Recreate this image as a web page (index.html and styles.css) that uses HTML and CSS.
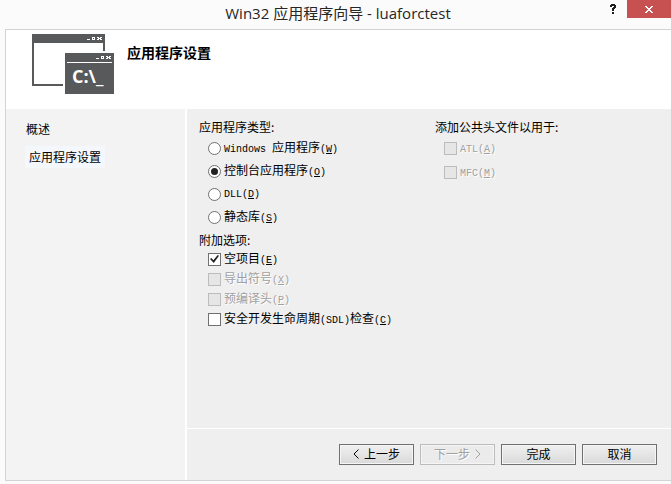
FILE: index.html
```html
<!DOCTYPE html>
<html lang="zh-CN">
<head>
<meta charset="utf-8">
<title>Win32 应用程序向导 - luaforctest</title>
<link rel="stylesheet" href="styles.css">
</head>
<body>
<div class="window">
  <div class="titlebar">
    <h1 class="title">Win32 应用程序向导 - luaforctest</h1>
    <div class="window-controls">
      <button class="help" type="button" aria-label="帮助">
        <svg width="6" height="10" viewBox="0 0 6 10" shape-rendering="crispEdges"><path d="M1 0h4v1h1v3h-1v1h-1v2h-2v-3h1v-1h1v-1h-2v1h-2v-2h1zM2 8h2v2h-2z" fill="#1e1e1e"/></svg>
      </button>
      <button class="close" type="button" aria-label="关闭">
        <svg width="8" height="7" viewBox="0 0 8 7" shape-rendering="crispEdges"><path d="M0 0h2v1h1v1h2v-1h1v-1h2v1h-1v1h-1v1h-1v1h1v1h1v1h1v1h-2v-1h-1v-1h-2v1h-1v1h-2v-1h1v-1h1v-1h1v-1h-1v-1h-1v-1h-1z" fill="#fff"/></svg>
      </button>
    </div>
  </div>
  <form class="frame">
    <header class="banner">
      <svg class="logo" width="82" height="60" viewBox="0 0 82 60" shape-rendering="crispEdges">
        <path d="M0 0h73v17h-2v-8h-69v41h29v2h-31z" fill="#58595b"/>
        <path d="M33 19h49v41h-49z" fill="#58595b"/>
        <g fill="#fff">
          <path d="M35 28h45v1h-45z"/>
          <path d="M55 5h3v1h-3zM60 3h3v3h-3zM65 3h2v1h1v-1h2v1h-1v1h1v1h-2v-1h-1v1h-2v-1h1v-1h-1z"/>
          <path d="M64 24h3v1h-3zM69 22h3v3h-3zM74 22h2v1h1v-1h2v1h-1v1h1v1h-2v-1h-1v1h-2v-1h1v-1h-1z"/>
        </g>
        <path d="M61 4h1v1h-1zM70 23h1v1h-1z" fill="#58595b"/>
        <text class="prompt" x="40" y="49">C:\_</text>
      </svg>
      <h2 class="page-title">应用程序设置</h2>
    </header>
    <div class="body">
      <nav class="sidebar">
        <a class="step" href="#overview">概述</a>
        <a class="step current" href="#settings" aria-current="page">应用程序设置</a>
      </nav>
      <main class="main">
        <div class="settings">
          <div class="column">
            <fieldset class="group radios">
              <legend>应用程序类型:</legend>
              <label class="option"><input type="radio" name="type"><span><span class="latin">Windows </span>应用程序<span class="latin">(<u>W</u>)</span></span></label>
              <label class="option"><input type="radio" name="type" checked><span>控制台应用程序<span class="latin">(<u>O</u>)</span></span></label>
              <label class="option"><input type="radio" name="type"><span class="latin">DLL(<u>D</u>)</span></label>
              <label class="option"><input type="radio" name="type"><span>静态库<span class="latin">(<u>S</u>)</span></span></label>
            </fieldset>
            <fieldset class="group checks">
              <legend>附加选项:</legend>
              <label class="option"><input type="checkbox" checked><span>空项目<span class="latin">(<u>E</u>)</span></span></label>
              <label class="option off"><input type="checkbox" disabled><span>导出符号<span class="latin">(<u>X</u>)</span></span></label>
              <label class="option off"><input type="checkbox" disabled><span>预编译头<span class="latin">(<u>P</u>)</span></span></label>
              <label class="option"><input type="checkbox"><span>安全开发生命周期<span class="latin">(SDL)</span>检查<span class="latin">(<u>C</u>)</span></span></label>
            </fieldset>
          </div>
          <div class="column">
            <fieldset class="group headers">
              <legend>添加公共头文件以用于:</legend>
              <label class="option off"><input type="checkbox" disabled><span><span class="latin">ATL(<u>A</u>)</span></span></label>
              <label class="option off"><input type="checkbox" disabled><span><span class="latin">MFC(<u>M</u>)</span></span></label>
            </fieldset>
          </div>
        </div>
        <footer class="actions">
          <button class="button" type="button"><svg width="6" height="10" viewBox="0 0 6 10"><path d="M5.500 .5L1 5l4.500 4.500"/></svg>上一步</button>
          <button class="button" type="button" disabled>下一步<svg width="6" height="10" viewBox="0 0 6 10"><path d="M.5 .5L5 5L.5 9.500"/></svg></button>
          <button class="button" type="button">完成</button>
          <button class="button" type="button">取消</button>
        </footer>
      </main>
    </div>
  </form>
</div>
</body>
</html>
```
FILE: styles.css
```css
* {
  box-sizing: border-box;
}

body {
  margin: 0;
  background: #fbfbfb;
  color: #000;
  font: 12px/18px "Noto Sans CJK SC", sans-serif;
}

.window {
  display: flex;
  flex-direction: column;
  min-height: 100vh;
  padding: 0 0 3px 5px;
}

.titlebar {
  display: grid;
  grid-template-columns: 1fr auto 1fr;
  height: 29px;
}

.title {
  grid-column: 2;
  margin: 0;
  color: #262626;
  font: 15px/26px "Open Sans", "Noto Sans CJK SC", sans-serif;
}

.window-controls {
  display: flex;
  align-items: flex-start;
  justify-content: flex-end;
}

.window-controls button {
  display: flex;
  align-items: center;
  justify-content: center;
  height: 18px;
  padding: 0;
  border: 0;
  background: none;
}

.window-controls .help {
  width: 28px;
}

.window-controls .close {
  width: 44px;
  background: #c75050;
}

.frame {
  display: flex;
  flex: 1;
  flex-direction: column;
  border: 1px solid #d3d3d3;
  border-right: 0;
  background: #fff;
}

.banner {
  display: flex;
  gap: 13px;
  height: 79px;
  padding: 4px 26px;
}

.prompt {
  fill: #fff;
  font: bold 18px "Open Sans", sans-serif;
}

.page-title {
  margin: 9px 0;
  font-size: 14px;
  line-height: 18px;
}

.body {
  display: flex;
  flex: 1;
  gap: 2px;
}

.sidebar {
  display: flex;
  flex: 0 0 179px;
  flex-direction: column;
  align-items: flex-start;
  gap: 6px;
  padding: 9px 19px;
  background: #f3f3f3;
}

.step {
  padding: 2px 1px;
  color: #000;
  line-height: 18px;
  text-decoration: none;
}

.current {
  padding: 2px 4px;
  background: #f4f7fc;
}

.main {
  display: flex;
  flex: 1;
  flex-direction: column;
  background: #efefef;
}

.settings {
  display: grid;
  flex: 1;
  grid-template-columns: 236px 1fr;
  padding: 9px 12px;
}

.group {
  display: flex;
  flex-direction: column;
  margin: 0;
  padding: 0;
  border: 0;
  white-space: nowrap;
}

.group legend {
  padding: 0;
}

.option {
  display: flex;
  align-items: center;
  gap: 3px;
  height: 20px;
  padding-left: 9px;
}

.radios {
  margin-bottom: 2px;
}

.radios legend {
  margin-bottom: 1px;
}

.radios .option {
  height: 23px;
}

.headers .option {
  height: 24px;
}

.latin {
  font: 10px/18px "Liberation Mono", monospace;
}

.off {
  color: #a0a0a0;
  text-shadow: 1px 1px #fff;
}

input {
  display: grid;
  place-items: center;
  flex: none;
  width: 13px;
  height: 13px;
  margin: 0;
  border: 1px solid #707070;
  background: #fff;
  appearance: none;
}

input[type="radio"] {
  border-radius: 50%;
}

input[type="radio"]:checked::before {
  width: 7px;
  height: 7px;
  border-radius: 50%;
  background: #212121;
  content: "";
}

input[type="checkbox"]:checked::before {
  width: 9px;
  height: 8px;
  background: #212121;
  clip-path: polygon(0 50%, 15% 38%, 38% 65%, 85% 0, 100% 10%, 42% 100%);
  content: "";
}

input:disabled {
  border-color: #bcbcbc;
  background: #e6e6e6;
}

.actions {
  display: flex;
  justify-content: flex-end;
  gap: 6px;
  padding: 15px 14px;
  border-top: 1px solid #fff;
}

.button {
  display: flex;
  align-items: center;
  justify-content: center;
  gap: 5px;
  width: 75px;
  height: 21px;
  padding: 0 0 2px;
  border: 1px solid #707070;
  background: linear-gradient(#f0f0f0, #d9d9d9);
  box-shadow: inset 0 0 0 1px #f5f5f5;
  color: #000;
  font: inherit;
}

.button path {
  fill: none;
  stroke: currentColor;
}

.button:disabled {
  border-color: #bcbcbc;
  background: #ebebeb;
  color: #a0a0a0;
  text-shadow: 1px 1px #fff;
}
```
